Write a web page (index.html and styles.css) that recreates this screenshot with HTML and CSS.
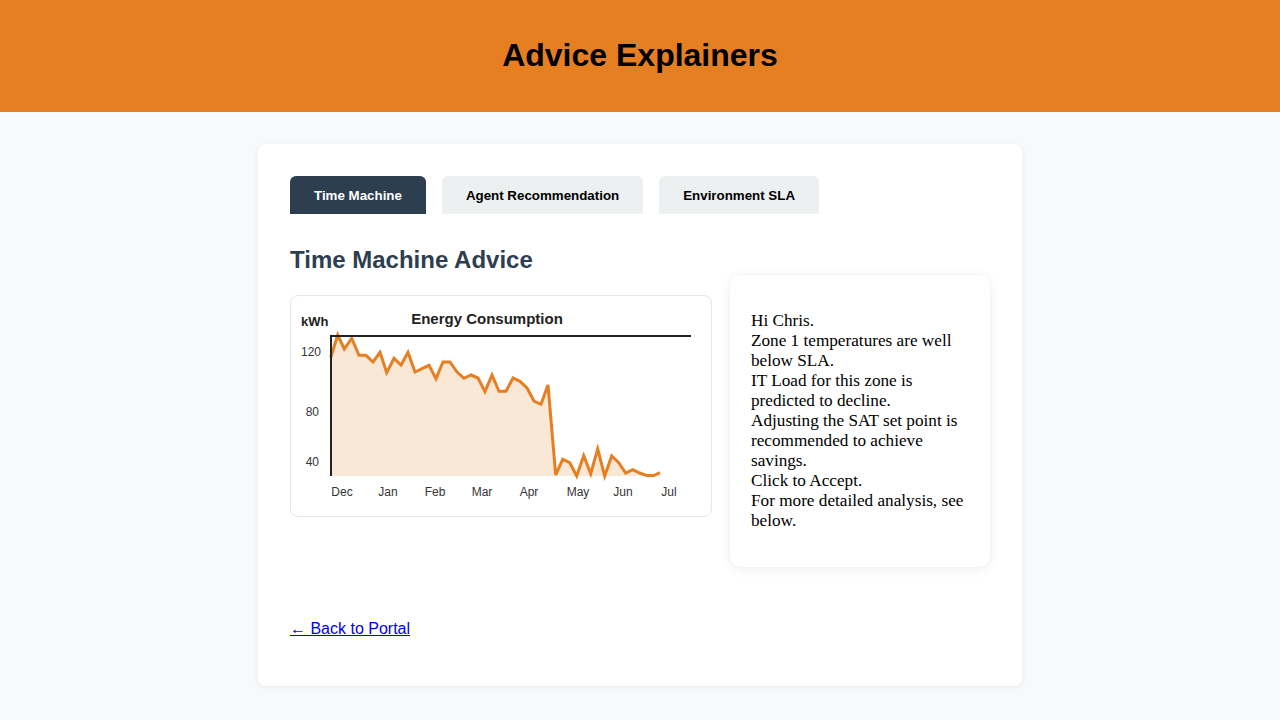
FILE: index.html
```html
<!DOCTYPE html>
<html lang="en">
<head>
<meta charset="utf-8">
<title>Advice Explainers</title>
<link rel="stylesheet" href="styles.css">
</head>
<body>
<header class="site-header">
  <h1 class="site-title">Advice Explainers</h1>
</header>
<main class="card">
  <nav class="tabs">
    <button class="tab tab-active">Time Machine</button>
    <button class="tab">Agent Recommendation</button>
    <button class="tab">Environment SLA</button>
  </nav>
  <h2 class="section-title">Time Machine Advice</h2>
  <div class="advice-row">
    <div class="chart-box">
      <svg class="chart" viewBox="291 296 420 220" width="420" height="220" xmlns="http://www.w3.org/2000/svg">
        <text x="487" y="324" class="chart-title" text-anchor="middle">Energy Consumption</text>
        <text x="301" y="326" class="chart-unit">kWh</text>
        <text x="321" y="356" class="tick" text-anchor="end">120</text>
        <text x="319" y="416" class="tick" text-anchor="end">80</text>
        <text x="319" y="466" class="tick" text-anchor="end">40</text>
        <path class="area" d="M330.7,357.7 L337.7,335 L344.3,349 L351.7,338.3 L359,355.3 L366,355.3 L373,362 L380,352.3 L386.7,372.7 L394,358.3 L401,365 L408,352.3 L415,372 L422,368.7 L429,365.3 L436,378.7 L443,362 L450,362 L457,372 L464,378.3 L471,375 L478,378 L485,391.7 L492,375 L499,391.3 L506,391.3 L513,378 L520,381.3 L527,388 L534,401 L541,404.3 L548,385 L555.7,475 L562.7,459.3 L569.7,462.7 L576.7,476 L583.7,455.7 L590.7,473.7 L597.7,449 L604.7,476 L611.7,456 L618.7,462.7 L625.7,473 L632.7,469.7 L639.7,473 L646.7,475.5 L653.7,475.5 L660,472.7 L660,476 L330.7,476 Z"/>
        <path class="line" d="M330.7,357.7 L337.7,335 L344.3,349 L351.7,338.3 L359,355.3 L366,355.3 L373,362 L380,352.3 L386.7,372.7 L394,358.3 L401,365 L408,352.3 L415,372 L422,368.7 L429,365.3 L436,378.7 L443,362 L450,362 L457,372 L464,378.3 L471,375 L478,378 L485,391.7 L492,375 L499,391.3 L506,391.3 L513,378 L520,381.3 L527,388 L534,401 L541,404.3 L548,385 L555.7,475 L562.7,459.3 L569.7,462.7 L576.7,476 L583.7,455.7 L590.7,473.7 L597.7,449 L604.7,476 L611.7,456 L618.7,462.7 L625.7,473 L632.7,469.7 L639.7,473 L646.7,475.5 L653.7,475.5 L660,472.7"/>
        <path class="axis" d="M331,476 L331,336 L691,336"/>
        <text x="342" y="496" class="tick" text-anchor="middle">Dec</text>
        <text x="388" y="496" class="tick" text-anchor="middle">Jan</text>
        <text x="435" y="496" class="tick" text-anchor="middle">Feb</text>
        <text x="482" y="496" class="tick" text-anchor="middle">Mar</text>
        <text x="529" y="496" class="tick" text-anchor="middle">Apr</text>
        <text x="578" y="496" class="tick" text-anchor="middle">May</text>
        <text x="623" y="496" class="tick" text-anchor="middle">Jun</text>
        <text x="669" y="496" class="tick" text-anchor="middle">Jul</text>
      </svg>
    </div>
    <aside class="advice-box">
      <p class="advice-text">Hi Chris.<br>Zone 1 temperatures are well below SLA.<br>IT Load for this zone is predicted to decline.<br>Adjusting the SAT set point is recommended to achieve savings.<br>Click to Accept.<br>For more detailed analysis, see below.</p>
    </aside>
  </div>
  <p class="back"><a href="#" class="back-link">← Back to Portal</a></p>
</main>
</body>
</html>
```
FILE: styles.css
```css
* { box-sizing: border-box; }
html, body { margin: 0; padding: 0; }
body {
  background: #f7f9fa;
  font-family: "Liberation Sans", Arial, sans-serif;
  color: #000;
  padding-bottom: 34px;
}
.site-header {
  background: #e67e22;
  height: 112px;
  display: flex;
  align-items: center;
  justify-content: center;
}
.site-title {
  margin: 0;
  font-size: 32px;
  font-weight: bold;
  line-height: 36px;
  color: #000;
  position: relative;
  top: -1px;
}
.card {
  width: 764px;
  margin: 32px auto 0;
  background: #fff;
  border-radius: 8px;
  box-shadow: 0 1px 6px rgba(0, 0, 0, 0.06);
  padding: 32px 32px 1px;
}
.tabs {
  display: flex;
  gap: 16px;
}
.tab {
  height: 38px;
  padding: 0 24px;
  border: none;
  border-radius: 6px 6px 0 0;
  background: #ecf0f1;
  color: #000;
  font-family: "Liberation Sans", Arial, sans-serif;
  font-size: 13.333px;
  font-weight: bold;
  cursor: pointer;
}
.tab-active {
  background: #2c3e50;
  color: #fff;
}
.section-title {
  margin: 32px 0 2px;
  font-size: 24px;
  line-height: 27px;
  font-weight: bold;
  color: #2c3e50;
}
.advice-row {
  display: flex;
  align-items: flex-start;
  gap: 18px;
}
.chart-box {
  flex: 1;
  margin-top: 20px;
  height: 222px;
  border: 1px solid #e6e6e6;
  border-radius: 8px;
  background: #fff;
}
.chart { display: block; }
.chart-title {
  font-family: "Liberation Sans", Arial, sans-serif;
  font-size: 15px;
  font-weight: bold;
  fill: #222;
}
.chart-unit {
  font-family: "Liberation Sans", Arial, sans-serif;
  font-size: 13px;
  font-weight: bold;
  fill: #222;
}
.tick {
  font-family: "Liberation Sans", Arial, sans-serif;
  font-size: 12px;
  fill: #333;
}
.area { fill: rgba(230, 126, 34, 0.18); stroke: none; }
.line {
  fill: none;
  stroke: #e67e22;
  stroke-width: 3;
  stroke-linejoin: miter;
}
.axis {
  fill: none;
  stroke: #222;
  stroke-width: 2;
}
.advice-box {
  width: 260px;
  flex: none;
  background: #fff;
  border-radius: 12px;
  box-shadow: 0 2px 12px rgba(0, 0, 0, 0.08);
  padding: 20px 21px;
}
.advice-text {
  margin: 16px 0;
  font-family: "Liberation Serif", "Times New Roman", serif;
  font-size: 17.2px;
  line-height: 20px;
  color: #000;
}
.back {
  margin: 53px 0 47px;
  font-size: 16px;
}
.back-link {
  color: #0000ee;
  text-decoration: underline;
}
```
